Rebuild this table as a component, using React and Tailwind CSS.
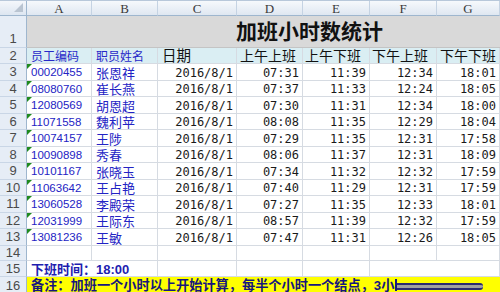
const COLS = "grid grid-cols-[27px_65px_66px_79px_66px_67px_67px_1fr]";

const records = [
  ["00020455", "张恩祥", "07:31", "11:39", "12:34", "18:01"],
  ["08080760", "崔长燕", "07:37", "11:33", "12:24", "18:05"],
  ["12080569", "胡恩超", "07:30", "11:31", "12:34", "18:00"],
  ["11071558", "魏利苹", "08:08", "11:35", "12:29", "18:04"],
  ["10074157", "王陟", "07:29", "11:35", "12:31", "17:58"],
  ["10090898", "秀春", "08:06", "11:37", "12:31", "18:09"],
  ["10101167", "张晓玉", "07:34", "11:32", "12:32", "17:59"],
  ["11063642", "王占艳", "07:40", "11:29", "12:31", "17:59"],
  ["13060528", "李殿荣", "07:27", "11:35", "12:33", "18:01"],
  ["12031999", "王际东", "08:57", "11:39", "12:32", "17:59"],
  ["13081236", "王敏", "07:47", "11:31", "12:26", "18:05"],
];

const RowNum = ({ n, bottom }) => (
  <div
    className={`flex justify-center bg-[#e6edf6] border-r border-b border-r-[#9eb6ce] border-b-[#c9d6e6] text-[13px] leading-none text-[#4a4a4a] font-['Liberation_Sans',sans-serif] ${
      bottom ? "items-end pb-[2px]" : "items-center"
    }`}
  >
    {n}
  </div>
);

const cell = "border-r border-b border-[#d6dbe2]";
const mono = "font-['DejaVu_Sans_Mono',monospace] text-[12px] text-[#1a1a1a]";
const cjk = "font-['Liberation_Sans','Noto_Sans_CJK_SC',sans-serif]";

export default function App() {
  return (
    <div className="w-[500px] h-[292px] overflow-hidden bg-white">
      {/* column headers */}
      <div className={`${COLS} h-[16px] border-t border-[#b8c8da]`}>
        <div className="relative bg-gradient-to-b from-[#f4f7fb] to-[#dde6f1] border-r border-b border-r-[#9eb6ce] border-b-[#9eb6ce]">
          <svg className="absolute right-[3px] bottom-[3px]" width="9" height="9">
            <polygon points="9,0 9,9 0,9" fill="#b9c4d1" />
          </svg>
        </div>
        {["A", "B", "C", "D", "E", "F", "G"].map((c) => (
          <div
            key={c}
            className="flex items-center justify-center bg-gradient-to-b from-[#f6f9fc] to-[#dfe7f1] border-r border-b border-r-[#c5d3e3] border-b-[#9eb6ce] text-[13px] leading-none text-[#3a3a3a] font-['Liberation_Serif',serif]"
          >
            {c}
          </div>
        ))}
      </div>

      {/* row 1 title */}
      <div className={`${COLS} h-[32px]`}>
        <RowNum n={1} bottom />
        <div
          className={`col-span-7 flex items-center pl-[209px] bg-[#d9d9d9] border-b border-[#c4c4c4] text-[21px] font-bold leading-none text-[#111] ${cjk}`}
        >
          加班小时数统计
        </div>
      </div>

      {/* row 2 headings */}
      <div className={`${COLS} h-[16px] bg-[#daeef3] ${cjk}`}>
        <RowNum n={2} />
        <div className={`${cell} flex items-end pl-[4px] text-[12px] leading-none text-[#2828c8]`}>员工编码</div>
        <div className={`${cell} flex items-end pl-[4px] text-[12px] leading-none text-[#2828c8]`}>职员姓名</div>
        <div className={`${cell} flex items-end pl-[4px] text-[14.5px] leading-none text-[#111]`}>日期</div>
        <div className={`${cell} flex items-end pl-[3px] text-[14px] leading-none text-[#111]`}>上午上班</div>
        <div className={`${cell} flex items-end pl-[2px] text-[14px] leading-none text-[#111]`}>上午下班</div>
        <div className={`${cell} flex items-end pl-[2px] text-[14px] leading-none text-[#111]`}>下午上班</div>
        <div className={`${cell} flex items-end pl-[3px] text-[14px] leading-none text-[#111]`}>下午下班</div>
      </div>

      {/* data rows */}
      {records.map((r, i) => (
        <div key={r[0]} className={`${COLS} h-[16.5px]`}>
          <RowNum n={i + 3} />
          <div className={`${cell} relative flex items-end pl-[4px] pb-[1px] text-[11.5px] leading-none text-[#2323c4] font-['Liberation_Sans',sans-serif]`}>
            <svg className="absolute left-0 top-0" width="5" height="5">
              <polygon points="0,0 5,0 0,5" fill="#1f8a1f" />
            </svg>
            {r[0]}
          </div>
          <div className={`${cell} flex items-end pl-[4px] text-[13px] leading-none text-[#2323c4] ${cjk}`}>{r[1]}</div>
          <div className={`${cell} flex items-end justify-end pr-[3px] pb-[1px] leading-none ${mono}`}>2016/8/1</div>
          {r.slice(2).map((t, j) => (
            <div key={j} className={`${cell} flex items-end justify-end pr-[3px] pb-[1px] leading-none ${mono}`}>
              {t}
            </div>
          ))}
        </div>
      ))}

      {/* row 14 */}
      <div className={`${COLS} h-[15px]`}>
        <RowNum n={14} />
        {[0, 1, 2, 3, 4, 5, 6].map((k) => (
          <div key={k} className={cell}></div>
        ))}
      </div>

      {/* row 15 */}
      <div className={`${COLS} h-[16px]`}>
        <RowNum n={15} />
        <div className={`${cell} col-span-2 flex items-end pl-[4px] text-[13px] font-bold leading-none text-[#1e1eb0] ${cjk}`}>
          下班时间：18:00
        </div>
        <div className={cell}></div>
        <div className={cell}></div>
        <div className={cell}></div>
        <div className="border-b border-[#d6dbe2]"></div>
        <div className={cell}></div>
      </div>

      {/* row 16 */}
      <div className={`${COLS} h-[18px]`}>
        <RowNum n={16} />
        <div className={`col-span-7 flex items-start pt-[2px] pl-[4px] bg-[#ffff00] text-[13.2px] font-bold leading-none text-[#16167e] ${cjk}`}>
          <span>备注：加班一个小时以上开始计算，每半个小时一个结点，3小</span>
          <span className="ml-[1px] w-[2px] h-[12px] bg-[#16167e]"></span>
          <span className="mt-[4px] w-[86px] h-[7px] border-y-2 border-[#2a2a70] bg-[#a0a0a0] rounded-r-[3px]"></span>
        </div>
      </div>
    </div>
  );
}
